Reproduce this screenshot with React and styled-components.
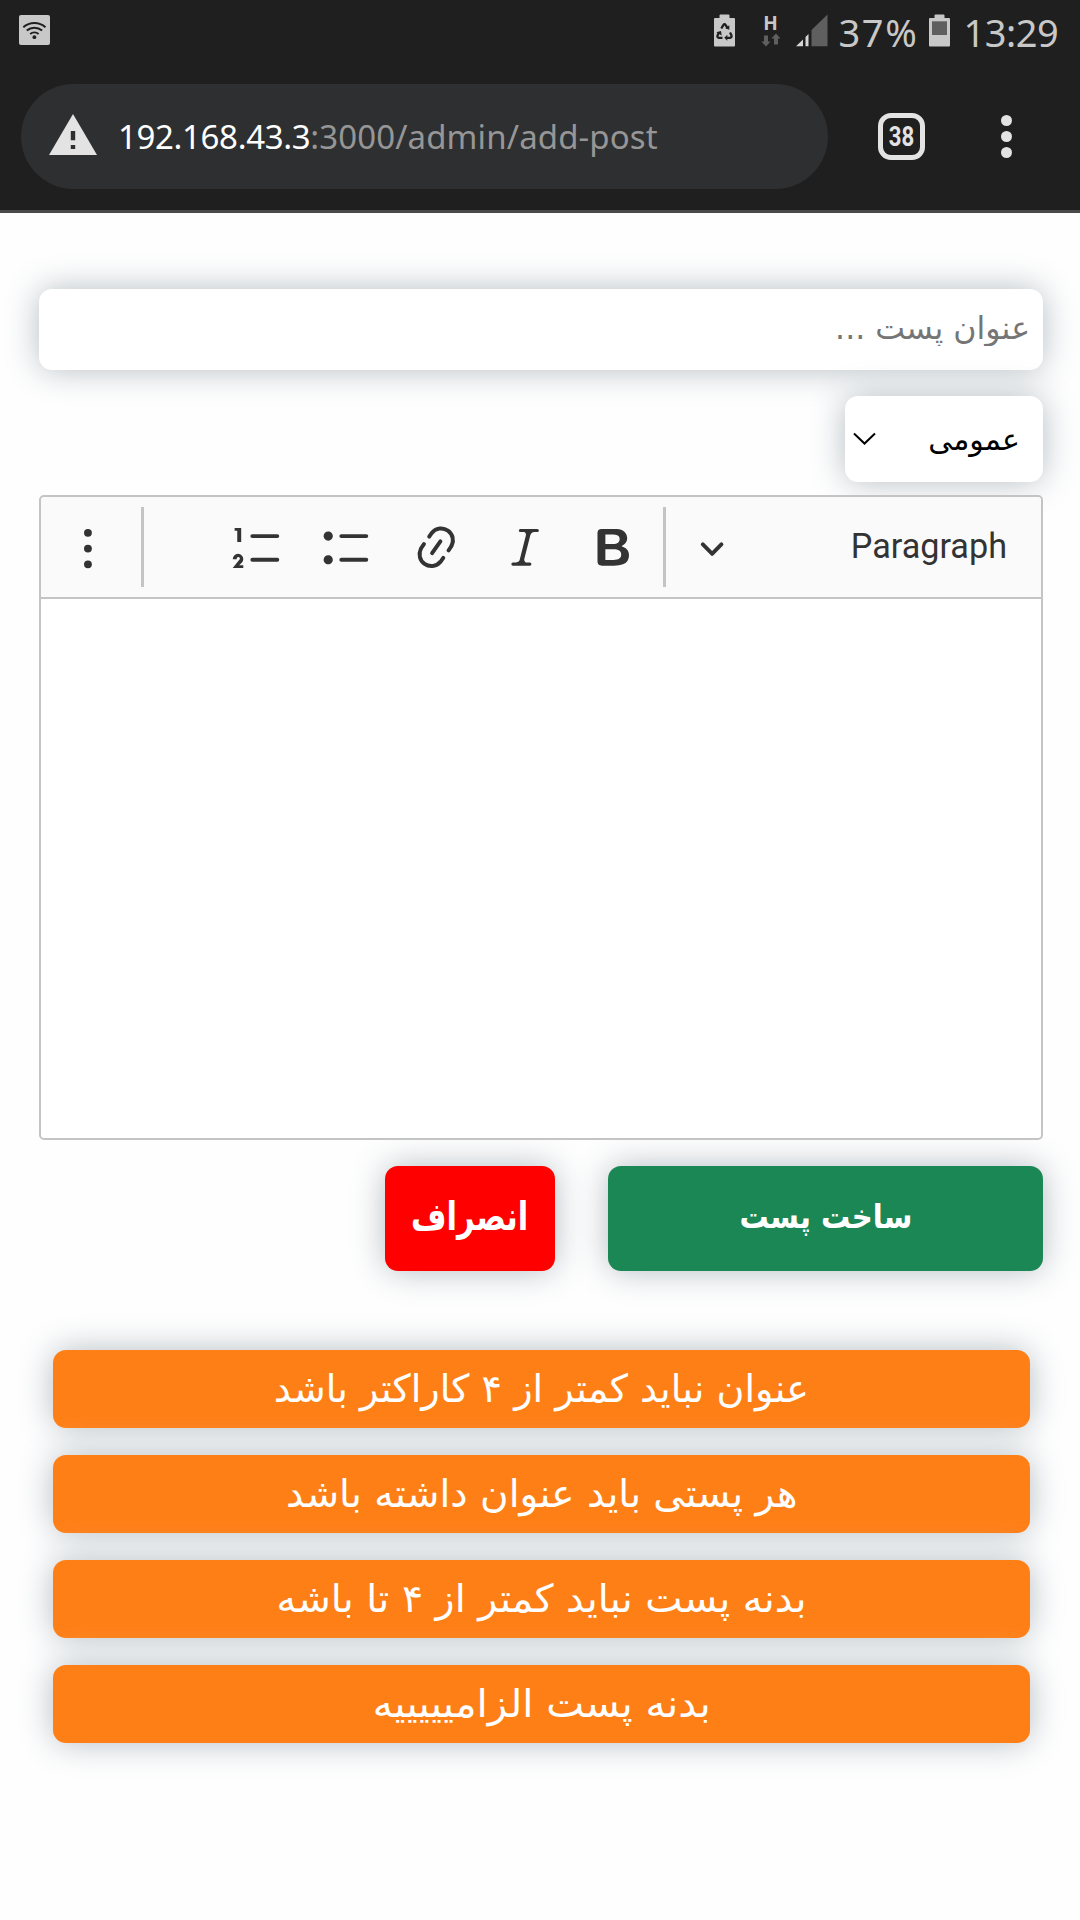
import React from "react";
import styled, { createGlobalStyle } from "styled-components";

const GlobalStyle = createGlobalStyle`
  *, *::before, *::after { box-sizing: border-box; }
  body { margin: 0; background: #fefefe; }
  button, input { font: inherit; border: 0; margin: 0; padding: 0; }
`;

const persian = `"DejaVu Sans", "Noto Sans", sans-serif`;
const latin = `"Noto Sans", "Open Sans", sans-serif`;
const glow = `0 0 34px #b6bec4`;

const Screen = styled.div`
  width: 1080px;
  height: 1920px;
  overflow: hidden;
  background: #fefefe;
`;

const BrowserHeader = styled.header`
  height: 213px;
  background: #1f1f1f;
  border-bottom: 3px solid #4a4a4b;
`;

const StatusBar = styled.div`
  display: flex;
  align-items: flex-start;
  height: 84px;
  padding: 14px 21px 0 19px;
  color: #c8c8c8;
  svg { display: block; flex: none; }
`;

const StatusRight = styled.div`
  display: flex;
  align-items: flex-start;
  margin-left: auto;
`;

const StatusText = styled.span`
  width: ${(p) => p.$width}px;
  margin-left: ${(p) => p.$gap}px;
  font: 400 38px/36px ${latin};
  letter-spacing: ${(p) => p.$track || 0}px;
  white-space: nowrap;
`;

const Network = styled.div`
  display: flex;
  flex-direction: column;
  align-items: center;
  width: 20px;
  margin: 0 15px 0 26px;
  font: 700 19px/19px ${latin};
`;

const AddressRow = styled.div`
  display: flex;
  align-items: center;
  height: 105px;
  padding-left: 21px;
`;

const AddressPill = styled.div`
  display: flex;
  align-items: center;
  width: 807px;
  height: 105px;
  padding-left: 28px;
  border-radius: 53px;
  background: #2e2f31;
`;

const Url = styled.span`
  margin-left: 21px;
  font: 400 33px/44px ${latin};
  letter-spacing: 0.120px;
  color: #969696;
  white-space: nowrap;
  b { font-weight: 400; letter-spacing: -0.350px; color: #fff; }
`;

const TabCount = styled.div`
  display: flex;
  align-items: center;
  justify-content: center;
  width: 47px;
  height: 47px;
  margin-left: 50px;
  border: 5px solid #e3e3e3;
  border-radius: 13px;
  color: #e3e3e3;
  font: 700 27px/30px Roboto, sans-serif;
  span { transform: scaleX(0.82); }
`;

const MenuDots = styled.div`
  display: flex;
  flex-direction: column;
  gap: 5px;
  margin-left: 76px;
  i { width: 11px; height: 11px; border-radius: 50%; background: #e3e3e3; }
`;

const Form = styled.main`
  direction: rtl;
  display: flex;
  flex-direction: column;
  padding: 76px 37px 0 39px;
  font-family: ${persian};
`;

const TitleInput = styled.input`
  width: 100%;
  height: 81px;
  padding: 0 13px 3px;
  border-radius: 13px;
  background: #fff;
  box-shadow: ${glow};
  font-size: 31.600px;
  outline: none;
  &::placeholder { color: #757575; opacity: 1; }
`;

const Category = styled.button`
  display: flex;
  align-items: center;
  justify-content: space-between;
  width: 198px;
  height: 86px;
  margin-top: 26px;
  padding: 0 23px 0 8px;
  border-radius: 13px;
  background: #fff;
  box-shadow: ${glow};
  color: #000;
  font-size: 30px;
`;

const Label = styled.span`
  display: block;
  white-space: nowrap;
  transform: translateY(${(p) => p.$y || 0}px) scaleX(${(p) => p.$stretch || 1});
`;

const Editor = styled.section`
  position: relative;
  margin-top: 13px;
  height: 645px;
  border: 2px solid #c4c4c4;
  border-radius: 5px;
  background: #fff;
`;

const Toolbar = styled.div`
  display: flex;
  align-items: center;
  height: 102px;
  background: #fafafa;
  border-bottom: 2px solid #c4c4c4;
  border-radius: 4px 4px 0 0;
  color: #333;
  svg { display: block; fill: currentColor; }
`;

const Heading = styled.div`
  display: flex;
  align-items: center;
  justify-content: space-between;
  width: 375px;
  padding: 0 34px 0 33px;
  font: 400 34.200px/40px Roboto, sans-serif;
  span { padding-bottom: 2px; }
`;

const Separator = styled.i`
  width: 3px;
  height: 80px;
  background: #c4c4c4;
`;

const Tools = styled.div`
  display: flex;
  width: 519px;
  padding-right: 5px;
`;

const Tool = styled.span`
  display: flex;
  justify-content: center;
  width: 88.800px;
`;

const More = styled.span`
  display: flex;
  padding-right: 26px;
`;

const Actions = styled.div`
  display: flex;
  gap: 53px;
  margin-top: 26px;
`;

const ActionButton = styled.button`
  display: flex;
  align-items: center;
  justify-content: center;
  width: ${(p) => p.$width}px;
  height: 105px;
  border-radius: 13px;
  background: ${(p) => p.$color};
  box-shadow: ${glow};
  color: #fff;
  font-size: ${(p) => p.$size}px;
  font-weight: 700;
`;

const Alerts = styled.div`
  display: flex;
  flex-direction: column;
  gap: 27px;
  margin: 79px 13px 0 14px;
`;

const Alert = styled.div`
  display: flex;
  align-items: center;
  justify-content: center;
  height: 78px;
  border-radius: 13px;
  background: #ff7f17;
  box-shadow: ${glow};
  color: #fff;
  font-size: 38.500px;
`;

const icons = {
  bold: "M10.187 17H5.773c-.637 0-1.092-.138-1.364-.415-.273-.277-.409-.718-.409-1.323V4.738c0-.617.14-1.062.419-1.332.279-.27.73-.406 1.354-.406h4.68c.69 0 1.288.041 1.793.124.506.083.96.242 1.36.478.341.197.644.447.906.75a3.262 3.262 0 0 1 .808 2.162c0 1.401-.722 2.426-2.167 3.075C15.05 10.175 16 11.315 16 13.01a3.756 3.756 0 0 1-2.296 3.504 6.1 6.1 0 0 1-1.517.377c-.571.073-1.238.11-2 .11zm-.217-6.217H7v4.087h3.069c1.977 0 2.965-.69 2.965-2.072 0-.707-.256-1.22-.768-1.537-.512-.319-1.277-.478-2.296-.478zM7 5.13v3.619h2.606c.729 0 1.292-.067 1.69-.2a1.6 1.6 0 0 0 .91-.765c.165-.267.247-.566.247-.897 0-.707-.26-1.176-.778-1.409-.519-.232-1.31-.348-2.375-.348H7z",
  italic: "m9.586 14.633.021.004c-.036.335.095.655.393.962.082.083.173.15.274.201h1.474a.6.6 0 1 1 0 1.2H5.304a.6.6 0 0 1 0-1.2h1.15c.474-.07.809-.182 1.005-.334.157-.122.291-.32.404-.597l2.416-9.55a1.053 1.053 0 0 0-.281-.823 1.12 1.12 0 0 0-.442-.296H8.15a.6.6 0 0 1 0-1.2h6.443a.6.6 0 1 1 0 1.2h-1.195c-.376.056-.65.155-.823.296-.215.175-.423.439-.623.79l-2.366 9.347z",
  link: "m11.077 15 .991-1.416a.75.75 0 1 1 1.229.86l-1.148 1.64a.748.748 0 0 1-.217.206 5.251 5.251 0 0 1-8.503-5.955.741.741 0 0 1 .12-.274l1.147-1.639a.75.75 0 1 1 1.228.86L4.933 10.7l.006.003a3.75 3.75 0 0 0 6.132 4.294l.006.004zm5.494-5.335a.748.748 0 0 1-.12.274l-1.147 1.639a.75.75 0 1 1-1.228-.86l.86-1.23a3.75 3.75 0 0 0-6.144-4.301l-.86 1.229a.75.75 0 0 1-1.229-.86l1.148-1.64a.748.748 0 0 1 .217-.206 5.251 5.251 0 0 1 8.503 5.955zm-4.563-2.532a.75.75 0 0 1 .184 1.045l-3.155 4.505a.75.75 0 1 1-1.229-.86l3.155-4.506a.75.75 0 0 1 1.045-.184z",
  bulleted: "M7 5.75c0 .414.336.75.75.75h9.5a.75.75 0 1 0 0-1.5h-9.5a.75.75 0 0 0-.75.75zm-6 0C1 4.784 1.777 4 2.75 4c.966 0 1.75.777 1.75 1.75 0 .966-.777 1.75-1.75 1.75C1.784 7.5 1 6.723 1 5.75zm6 9c0 .414.336.75.75.75h9.5a.75.75 0 1 0 0-1.5h-9.5a.75.75 0 0 0-.75.75zm-6 0c0-.966.777-1.75 1.75-1.75.966 0 1.75.777 1.75 1.75 0 .966-.777 1.75-1.75 1.75-.966 0-1.75-.777-1.75-1.75z",
  numbered: "M7 5.75c0 .414.336.75.75.75h9.5a.75.75 0 1 0 0-1.5h-9.5a.75.75 0 0 0-.75.75zM3.5 3v5H2V3.7H1v-1h2.5V3zM.343 17.857l2.59-3.257H2.92a.6.6 0 1 0-1.04 0H.302a2 2 0 1 1 3.995 0h-.001c-.048.405-.16.734-.333.988-.175.254-.59.692-1.244 1.312H4.3v1h-4l.043-.043zM7 14.75a.75.75 0 0 1 .75-.75h9.5a.75.75 0 1 1 0 1.5h-9.5a.75.75 0 0 1-.75-.75z",
};

const tools = ["bold", "italic", "link", "bulleted", "numbered"];

const alerts = [
  { text: "عنوان نباید کمتر از ۴ کاراکتر باشد", stretch: 0.99 },
  { text: "هر پستی باید عنوان داشته باشد", stretch: 1.012 },
  { text: "بدنه پست نباید کمتر از ۴ تا باشه", stretch: 1.025 },
  { text: "بدنه پست الزامیییییه", stretch: 1.045 },
];

const WifiBadge = () => (
  <svg width="31" height="31" viewBox="0 0 31 31">
    <rect y="1" width="31" height="30" rx="2" fill="#c8c8c8" />
    <g fill="none" stroke="#1f1f1f" strokeWidth="2">
      <path d="M4.300 13.200a16.500 16.500 0 0 1 22.200 0" />
      <path d="M7.700 16.600a11.800 11.800 0 0 1 15.400 0" />
      <path d="M11.200 19.900a6.600 6.600 0 0 1 8.400 0" />
    </g>
    <circle cx="15.400" cy="23.200" r="1.900" fill="#1f1f1f" />
  </svg>
);

const BatteryRecycle = () => (
  <svg width="21" height="33" viewBox="0 0 21 33">
    <path d="M5.500 4V1.500Q5.500 .5 6.500 .5h8q1 0 1 1V4H20q1 0 1 1v26.500q0 1-1 1H1q-1 0-1-1V5q0-1 1-1z" fill="#c8c8c8" />
    <g fill="none" stroke="#1f1f1f" strokeWidth="2.300">
      <path d="M7.300 14.500l2-3.400q1.200-1.800 2.400 0l1.800 3" />
      <path d="M16 18.500l1.400 2.800q.7 2.200-1.400 2.500h-3.500" />
      <path d="M8.500 23.800H5q-2.200-.3-1.400-2.500l1.600-3" />
    </g>
    <g fill="#1f1f1f">
      <path d="M15.300 11.200v4.600l-4-1.500z" />
      <path d="M13.300 20.800v6L10.300 23.800z" />
      <path d="M2.300 18.300l4.700-1.200.7 4.300z" />
    </g>
  </svg>
);

const DataArrows = () => (
  <svg width="20" height="14" viewBox="0 0 20 14" fill="#5f5f5f">
    <path d="M3 2.500h4v6h2.500L5 13.500.3 8.500H3z" />
    <path d="M13 11.500h4v-6h2.500L15 .5l-4.700 5H13z" />
  </svg>
);

const Signal = () => (
  <svg width="32" height="33" viewBox="0 0 32 33">
    <path d="M0 32.300L7 25.500v6.800zM9.500 23l3-3v12.300h-3z" fill="#d6d6d6" />
    <path d="M15.500 16L31.500 .5v31.800h-16z" fill="#5f5f5f" />
  </svg>
);

const Battery = () => (
  <svg width="31" height="33" viewBox="-10 0 31 33">
    <path d="M5.500 4V1.500Q5.500 .5 6.500 .5h8q1 0 1 1V4H20q1 0 1 1v26.500q0 1-1 1H1q-1 0-1-1V5q0-1 1-1z" fill="#c8c8c8" />
    <path d="M3 7.300h15V21H3z" fill="#5f5f5f" />
  </svg>
);

const Warning = () => (
  <svg width="48" height="45" viewBox="0 0 48 45">
    <path d="M24 0L48 41H0z" fill="#e3e3e3" />
    <path d="M21.800 17h4.400v9.300h-4.400zM21.800 31h4.400v4h-4.400z" fill="#2e2f31" />
  </svg>
);

export default function App() {
  return (
    <Screen>
      <GlobalStyle />
      <BrowserHeader>
        <StatusBar>
          <WifiBadge />
          <StatusRight>
            <BatteryRecycle />
            <Network>
              <span>H</span>
              <DataArrows />
            </Network>
            <Signal />
            <StatusText $width={80.500} $gap={11} $track={1.600}>37%</StatusText>
            <Battery />
            <StatusText $width={95.500} $gap={13.500} $track={-0.500}>13:29</StatusText>
          </StatusRight>
        </StatusBar>
        <AddressRow>
          <AddressPill>
            <Warning />
            <Url><b>192.168.43.3</b>:3000/admin/add-post</Url>
          </AddressPill>
          <TabCount><span>38</span></TabCount>
          <MenuDots><i /><i /><i /></MenuDots>
        </AddressRow>
      </BrowserHeader>

      <Form>
        <TitleInput placeholder="عنوان پست ..." />
        <Category>
          <Label>عمومی</Label>
          <svg width="24" height="14" viewBox="0 0 24 14" fill="none" stroke="#000" strokeWidth="2">
            <path d="M1 1.500L11.500 11.500 22 1.500" />
          </svg>
        </Category>
        <Editor>
          <Toolbar>
            <Heading>
              <span>Paragraph</span>
              <svg width="26.200" height="26.200" viewBox="0 0 10 10">
                <path d="M.941 4.523a.75.75 0 1 1 1.060-1.060l3.006 3.005 3.005-3.005a.75.75 0 1 1 1.060 1.060l-3.549 3.550a.75.75 0 0 1-1.168-.136L.941 4.523z" />
              </svg>
            </Heading>
            <Separator />
            <Tools>
              {tools.map((name) => (
                <Tool key={name}>
                  <svg width="52.500" height="52.500" viewBox="0 0 20 20"><path d={icons[name]} /></svg>
                </Tool>
              ))}
            </Tools>
            <Separator />
            <More>
              <svg width="52.500" height="52.500" viewBox="0 0 20 20">
                <circle cx="9.500" cy="4.500" r="1.500" />
                <circle cx="9.500" cy="10.500" r="1.500" />
                <circle cx="9.500" cy="16.500" r="1.500" />
              </svg>
            </More>
          </Toolbar>
        </Editor>
        <Actions>
          <ActionButton $width={435} $color="#1a8754" $size={33}>
            <Label $stretch={0.882} $y={-2.500}>ساخت پست</Label>
          </ActionButton>
          <ActionButton $width={170} $color="#ff0000" $size={39}>
            <Label $stretch={0.785} $y={-2.500}>انصراف</Label>
          </ActionButton>
        </Actions>
        <Alerts>
          {alerts.map((a) => (
            <Alert key={a.text}><Label $stretch={a.stretch} $y={-1}>{a.text}</Label></Alert>
          ))}
        </Alerts>
      </Form>
    </Screen>
  );
}
